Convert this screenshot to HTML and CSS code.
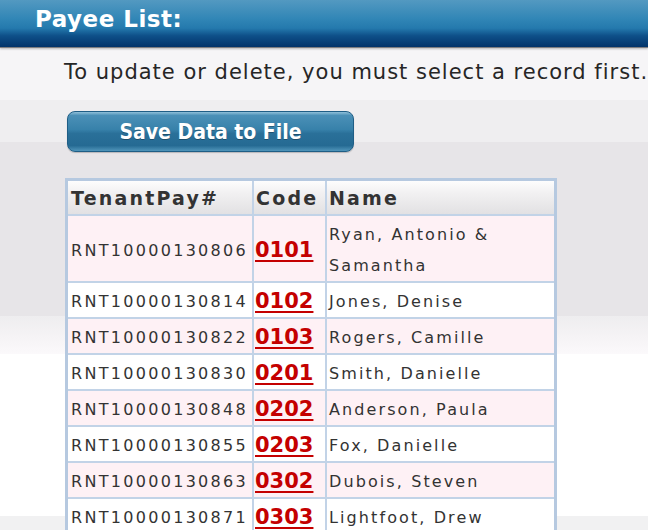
FILE: index.html
```html
<!DOCTYPE html>
<html lang="en">
<head>
    <meta charset="UTF-8">
    <meta name="viewport" content="width=device-width, initial-scale=1.0">
    <title>Payee List</title>
    <link rel="stylesheet" href="styles.css">
</head>
<body>
    <header class="title-bar">
        <h1>Payee List:</h1>
    </header>
    <section class="content">
        <p class="hint">To update or delete, you must select a record first.</p>
        <button class="save-btn" type="button">Save Data to File</button>
        <table class="payees">
            <thead>
                <tr>
                    <th class="col-id">TenantPay#</th>
                    <th class="col-code">Code</th>
                    <th class="col-name">Name</th>
                </tr>
            </thead>
            <tbody>
                <tr>
                    <td class="id">RNT10000130806</td>
                    <td class="code"><a href="#">0101</a></td>
                    <td class="name">Ryan, Antonio &amp; Samantha</td>
                </tr>
                <tr>
                    <td class="id">RNT10000130814</td>
                    <td class="code"><a href="#">0102</a></td>
                    <td class="name">Jones, Denise</td>
                </tr>
                <tr>
                    <td class="id">RNT10000130822</td>
                    <td class="code"><a href="#">0103</a></td>
                    <td class="name">Rogers, Camille</td>
                </tr>
                <tr>
                    <td class="id">RNT10000130830</td>
                    <td class="code"><a href="#">0201</a></td>
                    <td class="name">Smith, Danielle</td>
                </tr>
                <tr>
                    <td class="id">RNT10000130848</td>
                    <td class="code"><a href="#">0202</a></td>
                    <td class="name">Anderson, Paula</td>
                </tr>
                <tr>
                    <td class="id">RNT10000130855</td>
                    <td class="code"><a href="#">0203</a></td>
                    <td class="name">Fox, Danielle</td>
                </tr>
                <tr>
                    <td class="id">RNT10000130863</td>
                    <td class="code"><a href="#">0302</a></td>
                    <td class="name">Dubois, Steven</td>
                </tr>
                <tr>
                    <td class="id">RNT10000130871</td>
                    <td class="code"><a href="#">0303</a></td>
                    <td class="name">Lightfoot, Drew</td>
                </tr>
            </tbody>
        </table>
    </section>
</body>
</html>
```

FILE: styles.css
```css
html {
    background: linear-gradient(to bottom,
        #f6f5f7 0, #f6f5f7 100px,
        #efeef0 100px, #efeef0 142px,
        #e7e5e8 142px, #e7e5e8 316px,
        #eeedef 316px, #f5f3f5 336px,
        #fbf9fb 354px, #ffffff 354px,
        #ffffff 516px, #f1f1f2 516px);
}
body {
    font-family: "DejaVu Sans", Verdana, sans-serif;
    color: #333;
    margin: 0;
    padding: 0 0 20px;
}
.title-bar {
    height: 47px;
    background: linear-gradient(to bottom, #5399c1 0%, #3186b6 40%, #2479ad 60%, #0e5089 76%, #02336a 100%);
    border-bottom: 1px solid #7d7d80;
    box-shadow: 0 1px 2px rgba(0, 0, 0, 0.25);
}
.title-bar h1 {
    margin: 0;
    padding: 4px 0 0 35px;
    font-size: 23px;
    line-height: 30px;
    letter-spacing: 0.5px;
    color: #fff;
}
.content {
    padding: 12px 0 0 64px;
}
.hint {
    margin: 0;
    font-size: 21px;
    line-height: 24px;
    letter-spacing: 1px;
    color: #262626;
    white-space: nowrap;
}
.save-btn {
    display: block;
    margin: 27px 0 0 3px;
    width: 287px;
    height: 41px;
    border: 1px solid #1f5e86;
    border-radius: 8px;
    background: linear-gradient(to bottom, #8fbfd9 0, #4b90b7 9%, #3781aa 45%, #2a7099 55%, #256a93 86%, #5095ba 100%);
    box-shadow: 0 1px 1px rgba(0, 0, 0, 0.2);
    color: #fff;
    font-family: "DejaVu Sans Condensed", "DejaVu Sans", sans-serif;
    font-stretch: condensed;
    font-weight: bold;
    font-size: 21px;
    text-shadow: 0 1px 0 rgba(0, 0, 0, 0.3);
    padding: 0;
    cursor: pointer;
}
.payees {
    margin: 26px 0 0 1px;
    width: 492px;
    box-sizing: border-box;
    table-layout: fixed;
    border-collapse: separate;
    border-spacing: 0;
    border: 3px solid #b6c9e0;
}
.payees th,
.payees td {
    box-sizing: border-box;
    border-right: 2px solid #c2d3e7;
    border-bottom: 2px solid #c2d3e7;
    text-align: left;
    white-space: nowrap;
}
.payees th:last-child,
.payees td:last-child {
    border-right: none;
}
.payees tr:last-child td {
    border-bottom: none;
}
.payees th {
    height: 35px;
    padding: 2px 0 0 3px;
    font-size: 19px;
    line-height: 30px;
    letter-spacing: 2.2px;
    background: linear-gradient(to bottom, #fdfdfd 0%, #f2f1f2 35%, #e2e1e3 100%);
    vertical-align: top;
}
.payees .col-id { width: 186px; }
.payees .col-code { width: 73px; padding-left: 2px; }
.payees .col-name { width: 227px; padding-left: 2px; }
.payees td {
    padding: 3px 2px 0 3px;
    font-size: 16px;
    line-height: 31px;
    letter-spacing: 2.3px;
    vertical-align: middle;
}
.payees tbody tr:nth-child(odd) td {
    background-color: #fef1f5;
}
.payees tbody tr:nth-child(even) td {
    background-color: #fff;
}
.payees td.code {
    padding-left: 1px;
    font-size: 21px;
    font-weight: bold;
    letter-spacing: 0;
}
.payees td.code a {
    color: #c40000;
    text-decoration: underline;
    text-decoration-thickness: 2px;
    text-underline-offset: 3px;
}
.payees td.name {
    padding-left: 2px;
    letter-spacing: 2.1px;
    white-space: normal;
}
```
